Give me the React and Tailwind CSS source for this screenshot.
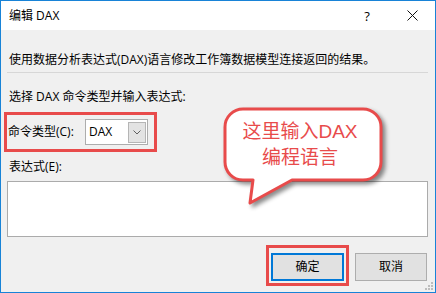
import React from "react";

export default function App() {
  return (
    <div className="relative w-[436px] h-[293px] overflow-hidden border border-[#1883d7] bg-[#f0f0f0] font-['Open_Sans','Noto_Sans_CJK_SC',sans-serif] text-[12px] text-black">
      {/* title bar */}
      <div className="h-[29px] bg-white flex items-center pl-[8px]">
        <span className="leading-[16px]">编辑 DAX</span>
        <div className="ml-auto mr-[13px] flex items-center">
          <span className="w-[20px] text-center text-[13px] leading-[16px]">?</span>
          <span className="w-[25px]" />
          <span className="w-[20px] h-[20px] flex items-center justify-center">
            <svg width="11" height="11" viewBox="0 0 11 11">
              <path d="M0.5 0.5 L10.5 10.5 M10.5 0.5 L0.5 10.5" stroke="#111" strokeWidth="1" fill="none" />
            </svg>
          </span>
        </div>
      </div>

      {/* body */}
      <div className="pl-[6px] pr-[7px] flex flex-col">
        <div className="mt-[22px] ml-[2px] leading-[16px]">
          使用数据分析表达式(DAX)语言修改工作簿数据模型连接返回的结果。
        </div>
        <div className="mt-[4px] h-[1px] bg-[#d7d7d7]" />
        <div className="mt-[16px] ml-[2px] leading-[16px]">选择 DAX 命令类型并输入表达式:</div>

        <div className="mt-[7px] -ml-[3px] w-[153px] h-[40px] border-[3px] border-[#e84b4b] flex items-center">
          <span className="w-[78px] pl-[1px] leading-[16px]">命令类型(C):</span>
          <div className="w-[63px] h-[26px] border border-[#adadad] bg-white flex items-center">
            <span className="pl-[3px] leading-[16px]">DAX</span>
            <div className="ml-auto mr-[1px] w-[18px] h-[21px] bg-[#e3e3e3] border border-[#b5b5b5] flex items-center justify-center">
              <svg width="8" height="5" viewBox="0 0 8 5">
                <path d="M0.5 0.5 L4 4 L7.5 0.5" stroke="#606060" strokeWidth="1" fill="none" />
              </svg>
            </div>
          </div>
        </div>

        <div className="mt-[7px] ml-[2px] leading-[16px]">表达式(E):</div>
        <div className="mt-[6px] h-[56px] border border-[#ababab] bg-white" />

        <div className="flex justify-end items-start">
          <div className="mt-[8px] border-[3px] border-[#e84b4b] pt-[5px] pb-[2px] px-[2px]">
            <div className="w-[73px] h-[28px] border-2 border-[#0078d7] bg-[#e1e1e1] flex items-center justify-center leading-[16px]">
              确定
            </div>
          </div>
          <div className="mt-[16px] ml-[6px] mr-[1px] w-[72px] h-[28px] border border-[#adadad] bg-[#e1e1e1] flex items-center justify-center leading-[16px]">
            取消
          </div>
        </div>
      </div>

      {/* resize grip */}
      <svg className="absolute right-[1px] bottom-[1px]" width="10" height="10" viewBox="0 0 10 10">
        <rect x="7" y="1" width="2" height="2" fill="#bdbdbd" />
        <rect x="4" y="4" width="2" height="2" fill="#bdbdbd" />
        <rect x="7" y="4" width="2" height="2" fill="#bdbdbd" />
        <rect x="1" y="7" width="2" height="2" fill="#bdbdbd" />
        <rect x="4" y="7" width="2" height="2" fill="#bdbdbd" />
        <rect x="7" y="7" width="2" height="2" fill="#bdbdbd" />
      </svg>

      {/* callout */}
      <svg
        className="absolute left-[214px] top-[99px] drop-shadow-[3px_3px_2px_rgba(0,0,0,0.45)]"
        width="180"
        height="115"
        viewBox="0 0 180 115"
      >
        <path
          d="M28 9 H148 A18 18 0 0 1 166 27 V62 A18 18 0 0 1 148 80 H77 L35 103 L38 80 H28 A18 18 0 0 1 10 62 V27 A18 18 0 0 1 28 9 Z"
          fill="#ffffff"
          stroke="#e84b4b"
          strokeWidth="3"
          strokeLinejoin="round"
        />
      </svg>
      <div className="absolute left-[224px] top-[118px] w-[150px] text-center text-[19px] leading-[26px] text-[#e84b4b] font-['Liberation_Sans','Noto_Sans_CJK_SC',sans-serif]">
        <div>这里输入DAX</div>
        <div>编程语言</div>
      </div>
    </div>
  );
}
